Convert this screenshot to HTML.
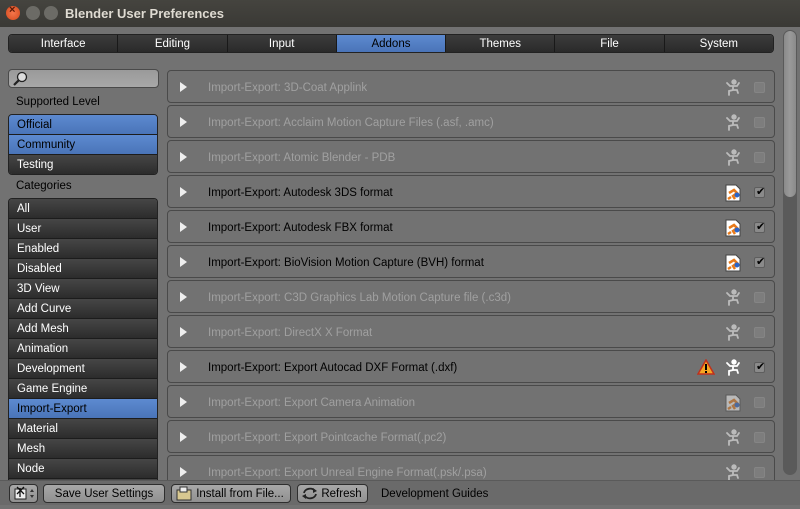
<!DOCTYPE html>
<html><head><meta charset="utf-8"><style>
*{margin:0;padding:0;box-sizing:border-box}
body{width:800px;height:505px;overflow:hidden;background:#727272;font-family:"Liberation Sans","DejaVu Sans",sans-serif;font-size:11.5px;position:relative}
.title{position:absolute;left:0;top:0;width:800px;height:27px;background:linear-gradient(#45443f,#3a3935);color:#dfdbd2;font-weight:bold;font-size:13px;line-height:27px;padding-left:65px}
.wb{position:absolute;top:6px;width:14px;height:14px;border-radius:50%}
.a{position:absolute}
.tabs{left:8px;top:34px;width:766px;height:19px;display:flex;border:1px solid #222;border-radius:4px;overflow:hidden}
.tabs div{flex:1;text-align:center;color:#fff;line-height:19px;background:linear-gradient(#3c3c3c,#2a2a2a);border-left:1px solid #191919}
.tabs div:first-child{border-left:none}
.tabs .on{background:linear-gradient(#5d8ad0,#4a74b8);color:#000}
.search{left:8px;top:69px;width:151px;height:19px;border:1px solid #4a4a4a;border-radius:4px;background:linear-gradient(#9a9a9a,#a8a8a8)}
.lbl{color:#000;left:16px}
.list{left:8px;width:150px;border:1px solid #222;border-radius:4px;overflow:hidden}
.list div{height:20px;line-height:21px;padding-left:8px;color:#fff;background:linear-gradient(#464646,#2c2c2c);border-top:1px solid #1c1c1c}
.list div:first-child{border-top:none;height:19px}
.list .on{background:linear-gradient(#5d8ad0,#4a74b8);color:#000}
.row{position:absolute;left:167px;width:608px;height:33px;border:1px solid #4a4a4a;border-radius:4px;background:#727272}
.row .t{position:absolute;left:40px;top:10px;color:#a0a0a0}
.row.e .t{color:#000}
.tri{position:absolute;left:12px;top:11px;width:0;height:0;border-top:5px solid transparent;border-bottom:5px solid transparent;border-left:7px solid #eee}
.cb{position:absolute;left:586px;top:11px;width:11px;height:11px;border:1px solid #858585;background:#7d7d7d;border-radius:2px}
.e .cb{background:#8a8a8a;border-color:#5e5e5e}
.cb span{position:absolute;left:1px;top:-3px;font-size:11px;color:#000;font-weight:bold}
.ic{position:absolute;left:557px;top:8px}
.bot{left:0;top:480px;width:800px;height:25px;background:#6a6a6a;border-top:1px solid #5a5a5a}
.btn{position:absolute;top:484px;height:19px;border:1px solid #2e2e2e;border-radius:4px;background:linear-gradient(#a8a8a8,#909090);color:#000;line-height:19px;text-align:center}
</style></head><body>
<div class="title">Blender User Preferences</div>
<div class="wb" style="left:6px;background:radial-gradient(#f5764b,#d2491d)"></div>
<div class="a" style="left:9px;top:4px;color:#5a1a08;font-size:11px;font-weight:bold">×</div>
<div class="wb" style="left:26px;background:#6c6b66"></div>
<div class="wb" style="left:44px;background:#6c6b66"></div>
<div class="a tabs"><div>Interface</div><div>Editing</div><div>Input</div><div class="on">Addons</div><div>Themes</div><div>File</div><div>System</div></div>
<div class="a search"><svg width="18" height="18" style="position:absolute;left:3px;top:0"><circle cx="10" cy="7" r="4.5" fill="#ddd" stroke="#222" stroke-width="1.3"/><line x1="6.7" y1="10.3" x2="2" y2="15" stroke="#222" stroke-width="2.2"/></svg></div>
<div class="a lbl" style="top:96px">Supported Level</div>
<div class="a list" style="top:114px"><div class="on">Official</div><div class="on">Community</div><div>Testing</div></div>
<div class="a lbl" style="top:180px">Categories</div>
<div class="a list" style="top:198px;height:282px;border-bottom:none;border-radius:4px 4px 0 0"><div>All</div><div>User</div><div>Enabled</div><div>Disabled</div><div>3D View</div><div>Add Curve</div><div>Add Mesh</div><div>Animation</div><div>Development</div><div>Game Engine</div><div class="on">Import-Export</div><div>Material</div><div>Mesh</div><div>Node</div><div></div></div>

<div class="a" style="left:783px;top:30px;width:14px;height:445px;border-radius:7px;background:#5a5a5a"></div>
<div class="a" style="left:784px;top:31px;width:12px;height:166px;border-radius:6px;background:linear-gradient(90deg,#8a8a8a,#9a9a9a,#8a8a8a)"></div>

<div id="rows"></div>
<div class="a bot"></div>
<div class="btn" style="left:9px;width:29px"><svg width="27" height="17"><rect x="5" y="4" width="11" height="10" fill="#eee" stroke="#222"/><path d="M7 2 L14 9 M14 2 L7 9 M10 3 V12" stroke="#111" stroke-width="1.3"/><path d="M20 7 l2-3 2 3z M20 10 l2 3 2-3z" fill="#333"/></svg></div>
<div class="btn" style="left:43px;width:122px">Save User Settings</div>
<div class="btn" style="left:171px;width:120px;padding-left:18px"><svg width="18" height="15" style="position:absolute;left:4px;top:1px"><rect x="1" y="4" width="14" height="10" fill="#d8c890" stroke="#333"/><rect x="4" y="1" width="7" height="5" fill="#eee" stroke="#333"/></svg>Install from File...</div>
<div class="btn" style="left:297px;width:71px;padding-left:18px"><svg width="18" height="15" style="position:absolute;left:3px;top:1px"><path d="M3 7 A6 5 0 0 1 14 5 M15 8 A6 5 0 0 1 4 10" fill="none" stroke="#222" stroke-width="1.8"/><path d="M12 2 l4 3-4 2z M5 13 l-4-3 4-2z" fill="#222"/></svg>Refresh</div>
<div class="a" style="left:381px;top:488px;color:#000">Development Guides</div>
<script>
const R=[["3D-Coat Applink",0],["Acclaim Motion Capture Files (.asf, .amc)",0],["Atomic Blender - PDB",0],["Autodesk 3DS format",1,1],["Autodesk FBX format",1,1],["BioVision Motion Capture (BVH) format",1,1],["C3D Graphics Lab Motion Capture file (.c3d)",0],["DirectX X Format",0],["Export Autocad DXF Format (.dxf)",1,0,1],["Export Camera Animation",0,2],["Export Pointcache Format(.pc2)",0],["Export Unreal Engine Format(.psk/.psa)",0]];
const fig=c=>`<svg width="16" height="18" viewBox="0 0 16 18"><g fill="none" stroke="${c}" stroke-width="1.8" stroke-linecap="round"><circle cx="9" cy="3" r="1.8" fill="${c}"/><path d="M2 4 L5 7 H12 L14 4 M8 7 L8 11 L4 12 L4 16 M8 11 L12 11 L13 14"/></g></svg>`;
const off=o=>`<svg width="16" height="18" viewBox="0 0 16 18" opacity="${o}"><path d="M1 1 H11 L15 5 V17 H1Z" fill="#fff" stroke="#444"/><path d="M4 9 L9 6 L12 9 L8 12 L10 15 M6 13 L3 15" stroke="#e87a1a" stroke-width="2.5" fill="none"/><circle cx="12" cy="11" r="2.5" fill="#2a64c8"/></svg>`;
let h="";R.forEach((r,i)=>{const y=70+35*i;
let ic=r[2]==1?off(1):r[2]==2?off(.5):fig(r[1]?"#fff":"#bbb");
h+=`<div class="row${r[1]?' e':''}" style="top:${y}px"><div class="tri"></div><div class="t" style="top:11px">Import-Export: ${r[0]}</div>`+
(r[3]?`<svg class="a" style="left:529px;top:8px" width="18" height="16"><path d="M9 1 L17 15 H1Z" fill="#f5a623" stroke="#c0301c" stroke-width="1.5"/><rect x="8" y="5" width="2" height="6" fill="#000"/><rect x="8" y="12" width="2" height="2" fill="#000"/></svg>`:"")+
`<div class="ic">${ic}</div><div class="cb">${r[1]?'<span>✔</span>':''}</div></div>`;});
document.getElementById("rows").innerHTML=h;
</script>
</body></html>
